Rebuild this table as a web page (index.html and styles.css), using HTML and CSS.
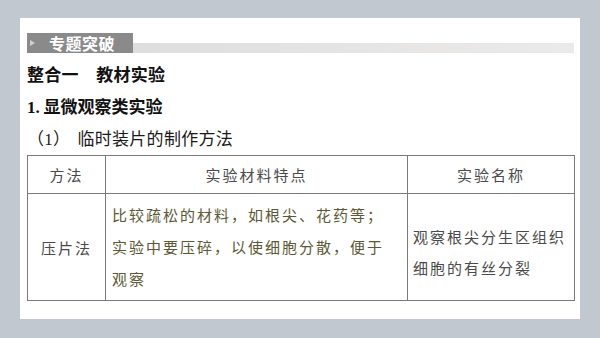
FILE: index.html
```html
<!DOCTYPE html>
<html lang="zh">
<head>
<meta charset="utf-8">
<link rel="stylesheet" href="styles.css">
</head>
<body>
<div class="slide">
  <div class="topic">
    <div class="topic-tag"><span class="tri"></span><span class="topic-text">专题突破</span></div>
    <div class="topic-rule"></div>
  </div>
  <div class="h1">整合一　教材实验</div>
  <div class="h2"><span class="num">1.</span> 显微观察类实验</div>
  <div class="h3"><span class="paren">（1）</span>临时装片的制作方法</div>
  <table class="tbl">
    <tr class="head">
      <td class="c1">方法</td>
      <td class="c2 center">实验材料特点</td>
      <td class="c3 center">实验名称</td>
    </tr>
    <tr class="body">
      <td class="c1">压片法</td>
      <td class="c2 mat">比较疏松的材料，如根尖、花药等；<br>实验中要压碎，以使细胞分散，便于<br>观察</td>
      <td class="c3 name">观察根尖分生区组织<br>细胞的有丝分裂</td>
    </tr>
  </table>
</div>
</body>
</html>
```
FILE: styles.css
```css
html, body {
  margin: 0;
  padding: 0;
}
body {
  background: #c1c8cf;
  width: 600px;
  height: 338px;
  overflow: hidden;
  font-family: "Noto Sans CJK SC", sans-serif;
}
.slide {
  margin: 18px 0 0 20px;
  width: 560px;
  height: 301px;
  background: #ffffff;
  box-sizing: border-box;
  padding: 15px 6px 0 7px;
}
.topic {
  display: flex;
  align-items: flex-end;
  height: 20px;
}
.topic-tag {
  width: 106px;
  height: 20px;
  background: #8a8a8a;
  display: flex;
  align-items: center;
  box-sizing: border-box;
  padding-left: 3px;
}
.tri {
  width: 0;
  height: 0;
  border-top: 3.5px solid transparent;
  border-bottom: 3.5px solid transparent;
  border-left: 5px solid #cfcfcf;
}
.topic-text {
  margin-left: 14px;
  color: #ffffff;
  font-weight: 700;
  font-size: 16px;
  line-height: 20px;
  letter-spacing: 0.5px;
}
.topic-rule {
  flex: 1;
  height: 10px;
  background: linear-gradient(to right, #dedede, #e8e7e6 70%, #ebeaea);
}
.h1, .h2, .h3 {
  font-size: 17px;
  line-height: 32px;
  color: #111111;
  white-space: nowrap;
}
.h1 {
  margin-top: 5px;
  font-weight: 700;
  letter-spacing: 0.3px;
}
.h2 {
  font-weight: 700;
}
.num {
  font-family: "Liberation Serif", serif;
  font-weight: 700;
}
.h3 {
  font-family: "Liberation Serif", "Noto Sans CJK SC", serif;
  font-weight: 400;
  color: #1a1a1a;
  letter-spacing: 0.3px;
}
.paren {
  display: inline-block;
  margin-right: 7px;
}
.tbl {
  margin-top: -1px;
  width: 547px;
  border-collapse: collapse;
  table-layout: fixed;
  font-size: 15px;
  letter-spacing: 2px;
  color: #4a4a4a;
  font-weight: 400;
}
.tbl td {
  border: 1px solid #7a7a7a;
  padding: 0;
  vertical-align: middle;
  white-space: nowrap;
}
.c1 {
  width: 77px;
  text-align: center;
}
.c2 {
  width: 301px;
}
.c3 {
  width: 166px;
}
.center {
  text-align: center;
}
.head td {
  height: 37px;
  line-height: 20px;
}
.body td {
  height: 97px;
}
.mat {
  padding-left: 6px !important;
  line-height: 32px;
  color: #5c5834;
}
.name {
  padding: 9px 0 0 5px !important;
  line-height: 31px;
  color: #4a4a4a;
}
```
